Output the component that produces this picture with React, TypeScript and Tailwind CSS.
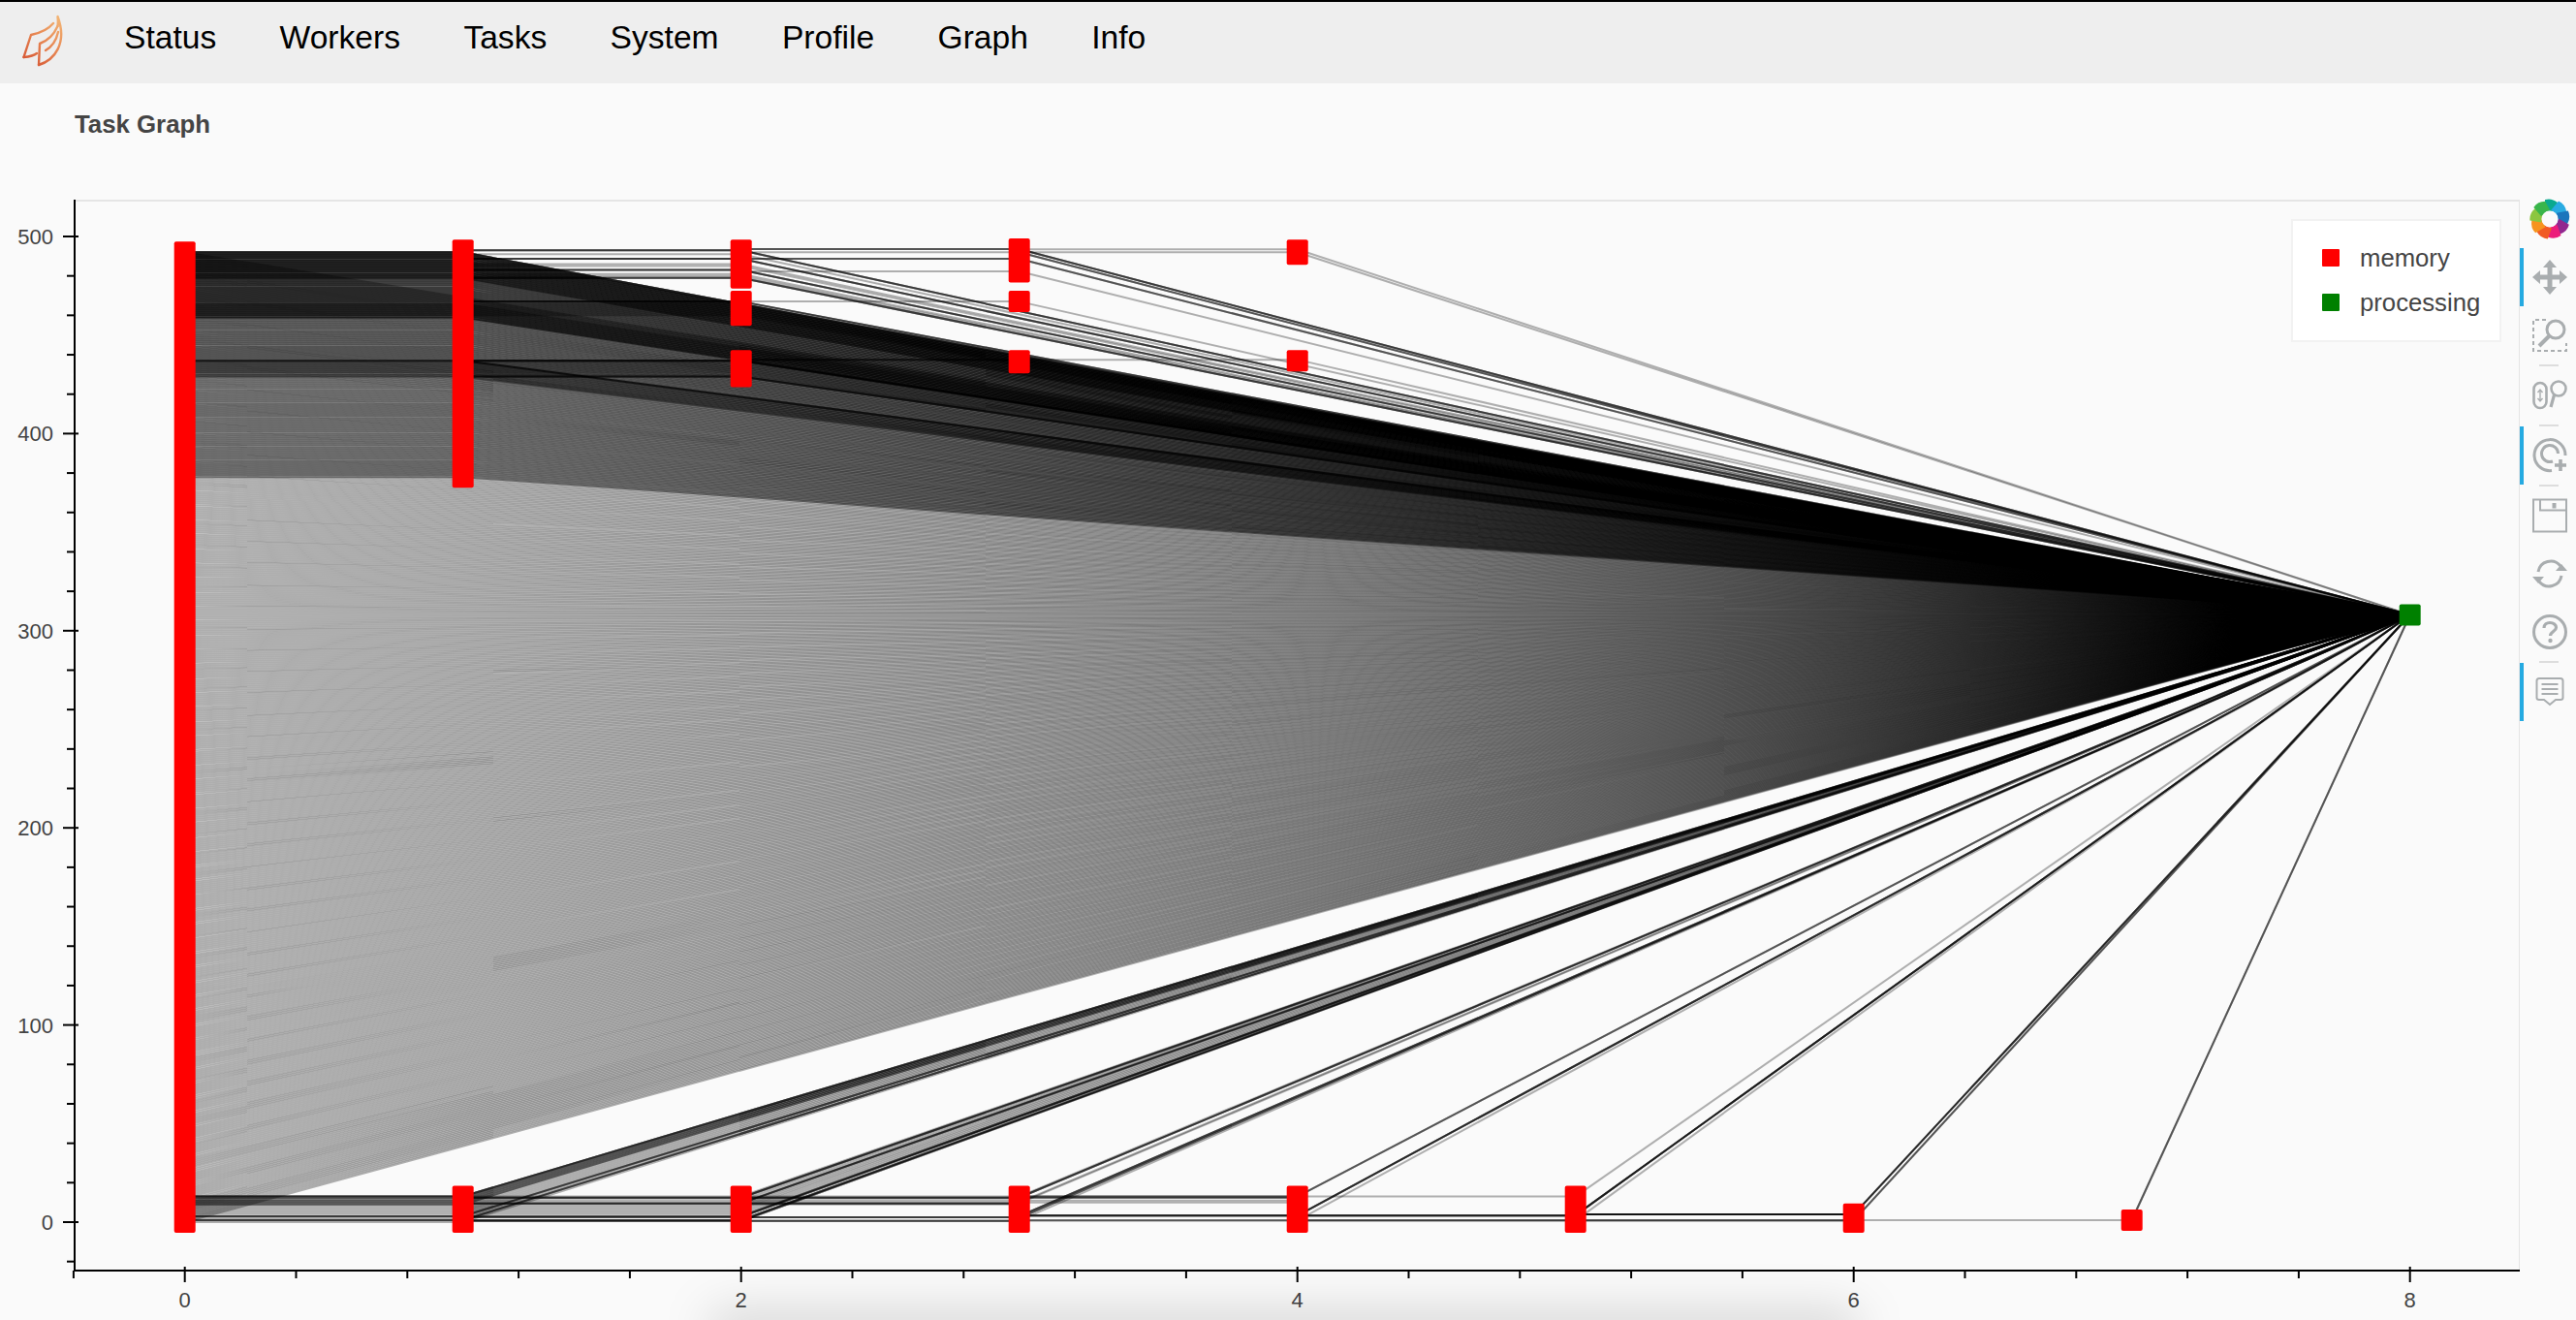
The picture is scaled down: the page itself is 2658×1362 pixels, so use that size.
import React from "react";

const X = (k: number) => 190.7 + 287 * k;
const Y = (v: number) => 1261 - 2.034 * v;

type W = [number, number];
const seq = (a: number, b: number, n = 1): W[] => {
  const r: W[] = [];
  for (let v = a; v <= b; v++) r.push([v, n]);
  return r;
};

function h01(v: number) {
  if (v >= 479) return 5;
  if (v >= 467) return 3;
  if (v >= 459) return 4;
  if (v >= 437) return 1;
  if (v >= 429) return 2;
  return 1;
}

const upperBand: W[] = seq(378, 492).map(([v]) => [v, v === 437 ? 5 : h01(v)] as W);
const bottom01: W[] = [[13, 4], [12, 2], [11, 2], [10, 2], [9, 2], [8, 1], [7, 1], [6, 1], [5, 1], [4, 1], [3, 3], [2, 1], [1, 3], [0, 1]];
const top12: W[] = [[493, 3], [491, 1], [488.7, 3], [486, 1], [485, 1], [483, 3], [481, 1], [480, 1], [479, 3], [467, 3], ...seq(460, 466), [437, 5], ...seq(430, 436), [429, 3]];
const bottom12: W[] = [[13, 1], [12.4, 3], [12, 1], [11, 1], [10, 1], [9.5, 3], [9, 1], [8, 1], [7, 1], [6, 1], [5, 1], [4, 1], [3, 2], [2.5, 2], [1, 3], [0.5, 2]];

type Edge = { d: string; o: number };
const edges: Edge[] = [];
const times = (n: number) => (n >= 2 ? n + 1 : n);
const quad = (x1: number, y1: number, x2: number, y2: number, o: number) => {
  const dx = x2 - x1;
  const dy = y2 - y1;
  const len = Math.hypot(dx, dy);
  const ax = -dy / len;
  const ay = dx / len;
  const p = (x: number, y: number) => `${x.toFixed(2)} ${y.toFixed(2)}`;
  edges.push({
    d: `M${p(x1 + ax, y1 + ay)}L${p(x2 + ax, y2 + ay)}L${p(x2 - ax, y2 - ay)}L${p(x1 - ax, y1 - ay)}Z`,
    o,
  });
};
const alphaFor = (v: number, k: number) => {
  if (k > 1) return 0.3;
  if (v >= 378 && v < 429) return 0.4;
  if (v >= 438 && v < 459) return 0.52;
  return 0.3;
};
const hor = (k: number, list: W[]) => {
  list.forEach(([v, n]) => {
    for (let i = 0; i < times(n); i++) quad(X(k), Y(v), X(k + 1), Y(v), alphaFor(v, k));
  });
};
const fan = (k: number, list: W[]) => {
  list.forEach(([v, n]) => {
    for (let i = 0; i < times(n); i++) quad(X(k), Y(v), X(8), Y(308), k === 0 ? 0.3 : alphaFor(v, k));
  });
};

fan(0, seq(0, 492));
hor(0, upperBand);
hor(0, bottom01);
fan(1, upperBand);
fan(1, bottom01);
hor(1, top12);
hor(1, bottom12);
fan(2, top12);
fan(2, [[13, 1], [12.4, 3], [12, 1], [11, 1], [10, 1], [9.5, 3], [9, 1], [8, 1], [7, 1], [6, 1], [5, 1], [4, 1], [3, 3], [2.5, 2], [1, 3], [0.5, 2]]);
hor(2, [[493.6, 2], [492, 1], [488.7, 2], [482.3, 1], [467, 1], [437.5, 2], [13, 1], [12.4, 3], [12, 1], [11, 1], [10, 1], [9.5, 3], [9, 1], [2.5, 3], [0.6, 3]]);
fan(3, [[493.6, 3], [492, 2], [488.7, 2], [482.3, 1], [467, 1], [437.5, 1], [13, 1], [12.4, 3], [10, 1], [9.5, 1], [3, 3], [2, 2], [0.8, 1]]);
hor(3, [[493.5, 1], [492, 1], [437.5, 1], [13, 2], [12.4, 2], [11, 1], [10, 1], [3.3, 5], [0.8, 2]]);
fan(4, [[493.5, 1], [492, 1], [437.5, 1], [13, 2], [3.3, 4], [0.8, 1]]);
hor(4, [[13, 1], [3.3, 5], [0.8, 3]]);
fan(5, [[13, 1], [3.5, 5], [0.8, 1]]);
hor(5, [[3.9, 6], [0.8, 3]]);
fan(6, [[3.9, 4], [0.8, 2]]);
hor(6, [[1, 1]]);
fan(7, [[1, 2]]);

const markers: [number, number, number][] = [
  [0, 492, 0],
  [1, 493, 378], [1, 13, 0],
  [2, 493, 479], [2, 467, 460], [2, 437, 429], [2, 13, 0],
  [3, 493.6, 482], [3, 467, 467], [3, 437, 436], [3, 13, 0],
  [4, 493, 491], [4, 437, 437], [4, 13, 0],
  [5, 13, 0],
  [6, 4, 0],
  [7, 1, 1],
];

const yTicks: number[] = [];
for (let v = -20; v <= 500; v += 20) yTicks.push(v);
const xTicks: number[] = [];
for (let i = 0; i <= 21; i++) xTicks.push(i);

function Chart() {
  return (
    <svg width={2600} height={1166} viewBox="0 196 2600 1166" className="block shrink-0">
      <g fill="#000">
        {edges.map((e, i) => (
          <path key={i} d={e.d} fillOpacity={e.o} />
        ))}
      </g>
      {markers.map(([k, a, b], i) => (
        <rect key={i} x={X(k) - 11} y={Y(a) - 11} width={22} height={Y(b) - Y(a) + 22} rx={2} fill="#ff0000" />
      ))}
      <rect x={X(8) - 11} y={Y(308) - 11} width={22} height={22} rx={2} fill="#008000" />

      <path d="M77 207H2600V1310" fill="none" stroke="#e5e5e5" strokeWidth={2} />
      <path d="M77 206V1311H2600" fill="none" stroke="#000" strokeWidth={2} />

      {yTicks.map((v) => {
        const major = v % 100 === 0;
        return <line key={v} x1={major ? 65 : 69} x2={major ? 81 : 77} y1={Y(v)} y2={Y(v)} stroke="#000" strokeWidth={2} />;
      })}
      {xTicks.map((i) => {
        const x = 75.9 + 114.8 * i;
        const major = (i - 1) % 5 === 0;
        return <line key={i} x1={x} x2={x} y1={major ? 1307 : 1311} y2={major ? 1323 : 1319} stroke="#000" strokeWidth={2} />;
      })}
      <g fill="#444444" fontSize={22}>
        {[0, 100, 200, 300, 400, 500].map((v) => (
          <text key={v} x={55} y={Y(v) + 8} textAnchor="end">{v}</text>
        ))}
        {[0, 2, 4, 6, 8].map((k) => (
          <text key={k} x={X(k)} y={1349} textAnchor="middle">{k}</text>
        ))}
      </g>
    </svg>
  );
}

function DaskLogo() {
  return (
    <svg width={44} height={56} viewBox="23 12 44 56" className="block shrink-0" fill="none" strokeLinecap="round" strokeLinejoin="round">
      <defs>
        <linearGradient id="dask" x1="24" y1="65" x2="64" y2="15" gradientUnits="userSpaceOnUse">
          <stop offset="0" stopColor="#d4502f" />
          <stop offset="0.55" stopColor="#e88a55" />
          <stop offset="1" stopColor="#f3b877" />
        </linearGradient>
      </defs>
      <g stroke="url(#dask)" strokeWidth={2.4}>
        <path d="M24.5 57L32 34C42 32 50 28 55 22" />
        <path d="M24.5 57C30 56.5 35 55.5 38 53" />
        <path d="M40 65L41 43C48 40.5 55 35 59.5 25" />
        <path d="M40 65C56 60 70 43 59.5 15C60 19 60 22 59.5 25" />
        <path d="M47 50C54 46 58 40 60 31" />
      </g>
    </svg>
  );
}

function BokehLogo() {
  const colors = ["#0aa98f", "#29abe2", "#1b75bc", "#92278f", "#ec1c7a", "#f15a24", "#f7941e", "#8cc63f", "#39b54a"];
  const n = colors.length;
  return (
    <svg width={42} height={42} viewBox="-21 -21 42 42" className="block">
      {colors.map((c, i) => (
        <path key={i} d="M-5 -20Q2 -22 8 -17L6 -7Q0 -9 -5 -8Z" fill={c} transform={`rotate(${(360 / n) * i})`} />
      ))}
      <circle r={8.5} fill="#fafafa" />
    </svg>
  );
}

const iconColor = "#a9adaf";

function IconMove() {
  return (
    <svg width={36} height={36} viewBox="0 0 36 36" fill={iconColor}>
      <path d="M18 0L25 8H20.5V15.5H28V11L36 18L28 25V20.5H20.5V28H25L18 36L11 28H15.5V20.5H8V25L0 18L8 11V15.5H15.5V8H11Z" />
    </svg>
  );
}
function IconBoxZoom() {
  return (
    <svg width={36} height={36} viewBox="0 0 36 36" fill="none" stroke={iconColor}>
      <path d="M14 2H1V34H35V26" strokeWidth={2} strokeDasharray="4 3" />
      <circle cx={24} cy={12} r={9} strokeWidth={3} />
      <path d="M17 19L7 29" strokeWidth={4} />
    </svg>
  );
}
function IconWheelZoom() {
  return (
    <svg width={36} height={36} viewBox="0 0 36 36" fill="none" stroke={iconColor}>
      <rect x={1.5} y={5} width={13} height={26} rx={6.5} strokeWidth={2.6} />
      <path d="M8 12V24M5.5 15L8 12L10.5 15M5.5 21L8 24L10.5 21" strokeWidth={1.4} />
      <circle cx={27} cy={11} r={7.5} strokeWidth={2.6} />
      <path d="M22.5 17.5L19 30" strokeWidth={3.2} />
    </svg>
  );
}
function IconTap() {
  return (
    <svg width={36} height={36} viewBox="0 0 36 36" fill="none" stroke={iconColor}>
      <path d="M20 33.5A16 16 0 1 1 34 18" strokeWidth={3} />
      <path d="M21 24A8.5 8.5 0 1 1 26.5 16" strokeWidth={3} />
      <path d="M29 22V34M23 28H35" strokeWidth={3.6} />
    </svg>
  );
}
function IconSave() {
  return (
    <svg width={36} height={36} viewBox="0 0 36 36" fill="none" stroke={iconColor}>
      <rect x={1} y={1.5} width={34} height={33} strokeWidth={2} />
      <path d="M8 2V12.5H34" strokeWidth={2} />
      <rect x={20.5} y={5} width={4} height={5.5} fill={iconColor} stroke="none" />
    </svg>
  );
}
function IconReset() {
  return (
    <svg width={36} height={36} viewBox="0 0 36 36" fill="none" stroke={iconColor}>
      <path d="M6 16A13 13 0 0 1 29 10" strokeWidth={3} />
      <path d="M30 20A13 13 0 0 1 7 26" strokeWidth={3} />
      <path d="M24 15H36L30 8Z" fill={iconColor} stroke="none" />
      <path d="M0 21H12L6 28Z" fill={iconColor} stroke="none" />
    </svg>
  );
}
function IconHelp() {
  return (
    <svg width={36} height={36} viewBox="0 0 36 36" fill="none" stroke={iconColor}>
      <circle cx={18} cy={18} r={16.5} strokeWidth={3} />
      <path d="M12 14C12 10 15 8.5 18 8.5C22 8.5 24.5 11 24.5 13.5C24.5 17.5 18.5 17.5 18.5 22" strokeWidth={3.2} />
      <circle cx={18.5} cy={27} r={2.2} fill={iconColor} stroke="none" />
    </svg>
  );
}
function IconHover() {
  return (
    <svg width={36} height={36} viewBox="0 0 36 36" fill="none" stroke={iconColor}>
      <path d="M7 4H29Q31.5 4 31.5 6.5V24Q31.5 26 29 26H24L18 31L12 26H7Q4.5 26 4.5 24V6.5Q4.5 4 7 4Z" strokeWidth={2} />
      <path d="M9.5 10H26.5M9.5 15H26.5M9.5 20H26.5" strokeWidth={2} />
    </svg>
  );
}

function Tool({ active, children }: { active?: boolean; children: React.ReactNode }) {
  return (
    <div className={`h-[60px] flex items-center justify-center border-l-4 ${active ? "border-[#26aae1]" : "border-transparent"}`}>
      {children}
    </div>
  );
}
function Sep() {
  return <div className="h-[2px] w-[20px] ml-[20px] bg-[#dddddd]" />;
}

export default function App() {
  const nav = ["Status", "Workers", "Tasks", "System", "Profile", "Graph", "Info"];
  return (
    <div className="relative w-[2658px] h-[1362px] overflow-hidden bg-[#fafafa] font-['Liberation_Sans',Arial,sans-serif]">
      <header className="h-[86px] border-t-2 border-black bg-[#eeeeee] flex items-start pl-[23px] pt-[12px]">
        <DaskLogo />
        <nav className="flex gap-[65.4px] ml-[61px] pt-[3px]">
          {nav.map((n) => (
            <span key={n} className="text-[33.6px] leading-[44px] text-black">{n}</span>
          ))}
        </nav>
      </header>
      <h1 className="h-[110px] pl-[77px] pt-[27px] text-[25.8px] leading-[30px] font-bold text-[#444444]">Task Graph</h1>
      <main className="relative flex h-[1166px]">
        <Chart />
        <aside className="w-[58px] shrink-0 flex flex-col">
          <div className="h-[60px] flex items-center justify-center pl-[4px]">
            <BokehLogo />
          </div>
          <Tool active><IconMove /></Tool>
          <Tool><IconBoxZoom /></Tool>
          <Sep />
          <Tool><IconWheelZoom /></Tool>
          <Sep />
          <Tool active><IconTap /></Tool>
          <Sep />
          <Tool><IconSave /></Tool>
          <Tool><IconReset /></Tool>
          <Tool><IconHelp /></Tool>
          <Sep />
          <Tool active><IconHover /></Tool>
        </aside>
        <div className="absolute left-[2364px] top-[30px] w-[217px] h-[127px] bg-white border-2 border-[#f2f2f2] pl-[30px] pt-[15px]">
          <div className="flex items-center h-[46px] gap-[21px]">
            <span className="w-[18px] h-[18px] bg-[#ff0000] rounded-[1px]" />
            <span className="text-[25.7px] text-[#444444]">memory</span>
          </div>
          <div className="flex items-center h-[46px] gap-[21px]">
            <span className="w-[18px] h-[18px] bg-[#008000] rounded-[1px]" />
            <span className="text-[25.7px] text-[#444444]">processing</span>
          </div>
        </div>
      </main>
      <div className="absolute left-[730px] top-[1352px] w-[1190px] h-[40px] rounded-full bg-black/15 blur-[24px]" />
    </div>
  );
}
